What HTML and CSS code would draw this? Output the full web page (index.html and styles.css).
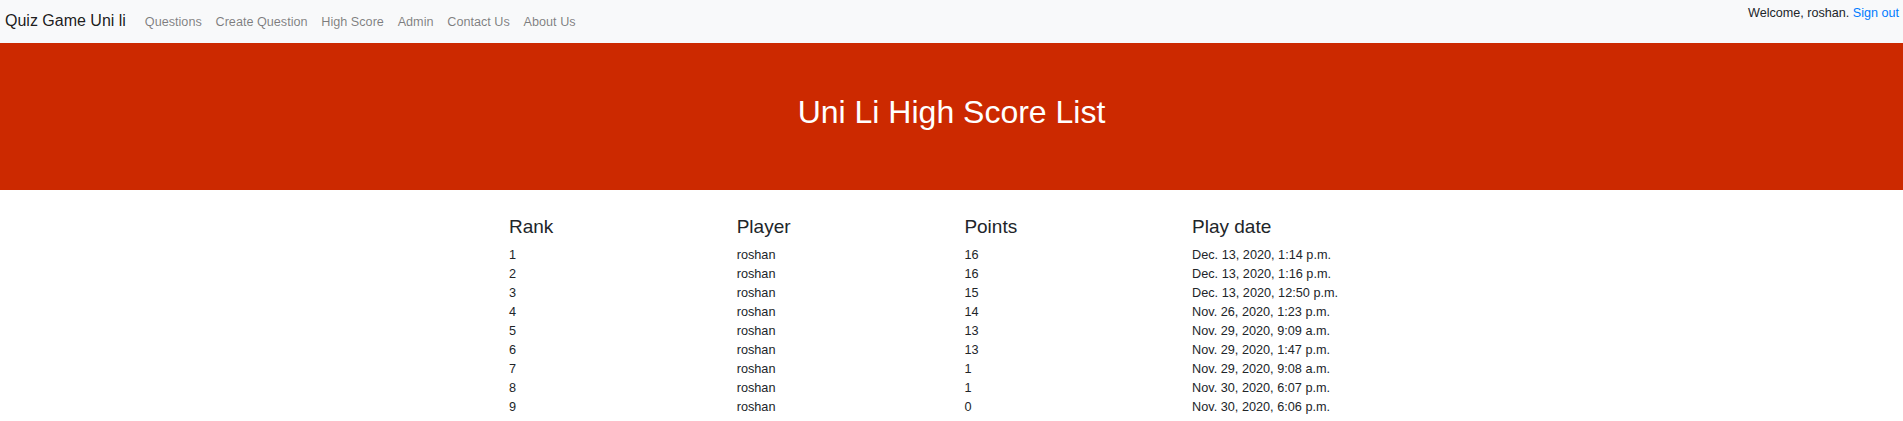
FILE: index.html
```html
<!DOCTYPE html>
<html lang="en">
<head>
<meta charset="utf-8">
<title>Uni Li High Score List</title>
<link rel="stylesheet" href="styles.css">
</head>
<body>
<nav class="navbar">
  <div class="nav-left">
    <a class="brand" href="#">Quiz Game Uni li</a>
    <ul class="nav-links">
      <li><a href="#">Questions</a></li>
      <li><a href="#">Create Question</a></li>
      <li><a href="#">High Score</a></li>
      <li><a href="#">Admin</a></li>
      <li><a href="#">Contact Us</a></li>
      <li><a href="#">About Us</a></li>
    </ul>
  </div>
  <div class="welcome">Welcome, roshan. <a href="#">Sign out</a></div>
</nav>
<header class="hero">
  <h1>Uni Li High Score List</h1>
</header>
<main class="board">
  <div class="grid head">
    <div>Rank</div><div>Player</div><div>Points</div><div>Play date</div>
  </div>
  <div class="grid row"><div>1</div><div>roshan</div><div>16</div><div>Dec. 13, 2020, 1:14 p.m.</div></div>
  <div class="grid row"><div>2</div><div>roshan</div><div>16</div><div>Dec. 13, 2020, 1:16 p.m.</div></div>
  <div class="grid row"><div>3</div><div>roshan</div><div>15</div><div>Dec. 13, 2020, 12:50 p.m.</div></div>
  <div class="grid row"><div>4</div><div>roshan</div><div>14</div><div>Nov. 26, 2020, 1:23 p.m.</div></div>
  <div class="grid row"><div>5</div><div>roshan</div><div>13</div><div>Nov. 29, 2020, 9:09 a.m.</div></div>
  <div class="grid row"><div>6</div><div>roshan</div><div>13</div><div>Nov. 29, 2020, 1:47 p.m.</div></div>
  <div class="grid row"><div>7</div><div>roshan</div><div>1</div><div>Nov. 29, 2020, 9:08 a.m.</div></div>
  <div class="grid row"><div>8</div><div>roshan</div><div>1</div><div>Nov. 30, 2020, 6:07 p.m.</div></div>
  <div class="grid row"><div>9</div><div>roshan</div><div>0</div><div>Nov. 30, 2020, 6:06 p.m.</div></div>
</main>
</body>
</html>
```
FILE: styles.css
```css
* { box-sizing: border-box; }
html, body {
  margin: 0;
  padding: 0;
  background: #fff;
  font-family: "Liberation Sans", Arial, sans-serif;
  color: #212529;
}
a { text-decoration: none; }

.navbar {
  display: flex;
  justify-content: space-between;
  align-items: flex-start;
  height: 43px;
  padding: 0 4px 0 5px;
  background: #f8f9fa;
}
.nav-left {
  display: flex;
  align-items: baseline;
  padding-top: 10.5px;
}
.brand {
  font-size: 16px;
  line-height: 20px;
  color: rgba(0, 0, 0, 0.9);
  margin-right: 12px;
}
.nav-links {
  display: flex;
  list-style: none;
  margin: 0;
  padding: 0;
}
.nav-links a {
  display: block;
  font-size: 12.65px;
  line-height: 16px;
  padding: 0 6.9px;
  color: rgba(0, 0, 0, 0.5);
}
.welcome {
  font-size: 12.6px;
  line-height: 16px;
  margin-top: 4.6px;
  color: #212529;
}
.welcome a { color: #007bff; }

.hero {
  height: 147px;
  background: #cc2900;
  padding-top: 51px;
  text-align: center;
}
.hero h1 {
  margin: 0;
  font-size: 32px;
  line-height: 36px;
  font-weight: 400;
  color: #fff;
}

.board {
  width: 937px;
  margin: 0 auto;
  padding: 25px 0 0 26px;
}
.grid {
  display: grid;
  grid-template-columns: repeat(4, 227.7px);
}
.head {
  font-size: 19px;
  line-height: 23px;
  margin-bottom: 7.5px;
}
.row {
  font-size: 12.7px;
  line-height: 19px;
}
```
